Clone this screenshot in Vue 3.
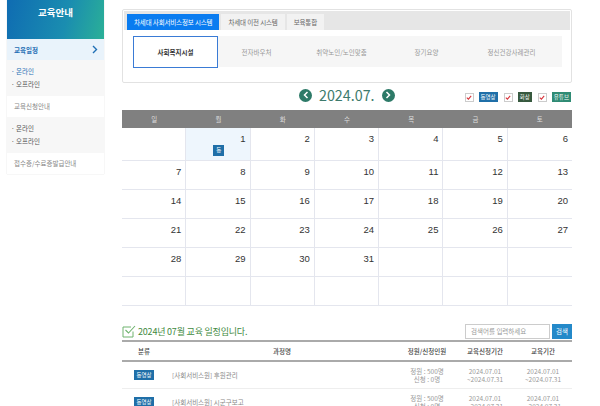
<template>
  <div class="page">
    <aside class="side">
      <div class="side-title">교육안내</div>
      <div class="menu-on">
        <span>교육일정</span>
        <svg width="6" height="9" viewBox="0 0 6 9"><path d="M1 1l3.5 3.5L1 8" fill="none" stroke="#1f6fb5" stroke-width="1.4" /></svg>
      </div>
      <ul class="sub">
        <li class="on">온라인</li>
        <li>오프라인</li>
      </ul>
      <div class="menu">교육신청안내</div>
      <ul class="sub">
        <li>온라인</li>
        <li>오프라인</li>
      </ul>
      <div class="menu">접수증/수료증발급안내</div>
    </aside>

    <main class="main">
      <section class="tab-box">
        <div class="tabs">
          <div class="tab active">차세대 사회서비스정보 시스템</div>
          <div class="tab">차세대 이전 시스템</div>
          <div class="tab">보육통합</div>
        </div>
        <div class="cats">
          <div v-for="(c, i) in cats" :key="c" class="cat" :class="{ sel: i === 0 }">{{ c }}</div>
        </div>
      </section>

      <div class="month-row">
        <div class="month">
          <span class="round"><svg width="6" height="8" viewBox="0 0 6 8"><path d="M4.5 1L1.5 4l3 3" fill="none" stroke="#fff" stroke-width="1.5" /></svg></span>
          <strong>2024.07.</strong>
          <span class="round"><svg width="6" height="8" viewBox="0 0 6 8"><path d="M1.5 1l3 3-3 3" fill="none" stroke="#fff" stroke-width="1.5" /></svg></span>
        </div>
        <div class="legend">
          <template v-for="l in legend" :key="l.name">
            <span class="check"><svg width="6" height="5" viewBox="0 0 6 5"><path d="M.8 2.6l1.6 1.5L5.2.8" fill="none" stroke="#d8333a" stroke-width="1.1" /></svg></span>
            <span class="tag" :class="l.cls">{{ l.name }}</span>
          </template>
        </div>
      </div>

      <div class="cal">
        <div v-for="d in days" :key="d" class="dow">{{ d }}</div>
        <div v-for="(c, i) in cells" :key="i" class="cell" :class="{ today: c === 1 }">
          <span v-if="c">{{ c }}</span>
          <em v-if="c === 1" class="mini">동</em>
        </div>
      </div>

      <div class="list-head">
        <h2>
          <svg width="14" height="13" viewBox="0 0 14 13"><path d="M11 6.5V12H1V2h8" fill="none" stroke="#6fb36f" stroke-width="1" /><path d="M3.5 5l3 3L13 1" fill="none" stroke="#6fb36f" stroke-width="1.1" /></svg>
          2024년 07월 교육 일정입니다.
        </h2>
        <div class="search">
          <input placeholder="검색어를 입력하세요" />
          <button>검색</button>
        </div>
      </div>

      <table>
        <thead>
          <tr>
            <th class="c1">분류</th>
            <th>과정명</th>
            <th class="c3">정원/신청인원</th>
            <th class="c3">교육신청기간</th>
            <th class="c3">교육기간</th>
          </tr>
        </thead>
        <tbody>
          <tr v-for="r in rows" :key="r">
            <td><span class="tag blue">동영상</span></td>
            <td class="name">{{ r }}</td>
            <td>정원 : 500명<br />신청 : 0명</td>
            <td>2024.07.01<br />~2024.07.31</td>
            <td>2024.07.01<br />~2024.07.31</td>
          </tr>
        </tbody>
      </table>
    </main>
  </div>
</template>

<script setup>
const cats = ['사회복지시설', '전자바우처', '취약노인/노인맞춤', '장기요양', '정신건강사례관리']
const legend = [
  { name: '동영상', cls: 'blue' },
  { name: '화상', cls: 'dark' },
  { name: '유튜브', cls: 'teal' }
]
const days = ['일', '월', '화', '수', '목', '금', '토']
// 7월 1일이 월요일, 마지막 줄은 빈 칸
const cells = [null]
for (let i = 1; i <= 31; i++) cells.push(i)
for (let i = 0; i < 10; i++) cells.push(null)
const rows = ['[사회서비스원] 후원관리', '[사회서비스원] 시군구보고']
</script>

<style>
html, body {
  margin: 0;
  height: 406px;
  overflow: hidden;
  background: #fff;
}
</style>

<style scoped>
.page {
  display: flex;
  align-items: flex-start;
  width: 600px;
  height: 406px;
  overflow: hidden;
  font-family: "Noto Sans CJK KR", "Noto Sans", sans-serif;
  color: #333;
}

.side {
  width: 97px;
  margin-left: 7px;
  flex: none;
  background: #f7f7f7;
  box-shadow: 0 0 1px #ccc;
}

.side-title {
  height: 39px;
  box-sizing: border-box;
  padding-bottom: 15px;
  display: flex;
  align-items: center;
  justify-content: center;
  color: #fff;
  font-size: 9.5px;
  font-weight: 700;
  background: linear-gradient(105deg, #0f6cb2 0%, #1a8db0 60%, #2bb097 100%);
}

.menu-on {
  height: 21px;
  display: flex;
  align-items: center;
  justify-content: space-between;
  padding: 0 6px 0 7px;
  background: #e9f3fb;
  color: #1f6fb5;
  font-size: 6.5px;
  font-weight: 700;
}

.menu {
  height: 21px;
  line-height: 21px;
  padding-left: 7px;
  background: #fff;
  color: #888;
  font-size: 6.5px;
}

.sub {
  list-style: none;
  margin: 0;
  padding: 5px 0 5px 7px;
  font-size: 6.5px;
  color: #555;
}

.sub li {
  height: 13px;
  line-height: 13px;
}

.sub li::before {
  content: "· ";
  margin-left: -3px;
}

.sub li.on {
  color: #1f6fb5;
}

.main {
  width: 450px;
  margin-left: 18px;
  flex: none;
}

.tab-box {
  height: 74px;
  margin-top: 9px;
  border: 1px solid #e2e2e2;
  border-radius: 2px;
  box-sizing: border-box;
  padding: 1px 0 0 1px;
}

.tabs {
  display: flex;
  gap: 2px;
  height: 19px;
  box-sizing: border-box;
  padding: 3px 0 0 3px;
  margin-right: 1px;
  background: #e6e6e6;
}

.tab {
  padding: 0 7px;
  height: 16px;
  line-height: 16px;
  background: #f2f2f2;
  color: #666;
  font-size: 6.5px;
  letter-spacing: -0.15px;
}

.tab.active {
  background: #0a7cf0;
  color: #fff;
}

.cats {
  display: flex;
  margin: 6px 9px 0;
  padding-right: 8px;
  height: 31px;
  background: #f6f6f6;
}

.cat {
  flex: 1;
  display: flex;
  align-items: center;
  justify-content: center;
  color: #999;
  font-size: 6.5px;
}

.cat.sel {
  flex: none;
  width: 85px;
  height: 32px;
  margin-right: -4px;
  box-sizing: border-box;
  border: 1px solid #3a7bd5;
  background: #fff;
  color: #333;
  font-weight: 700;
}

.month-row {
  position: relative;
  height: 27px;
  display: flex;
  align-items: center;
  justify-content: flex-end;
}

.month {
  position: absolute;
  left: 177px;
  top: 5px;
  display: flex;
  align-items: center;
  gap: 7px;
}

.month strong {
  font-size: 14.3px;
  font-weight: 400;
  line-height: 14px;
  color: #3d7a6c;
}

.round {
  width: 13px;
  height: 13px;
  border-radius: 50%;
  background: #2d7a68;
  display: flex;
  align-items: center;
  justify-content: center;
}

.legend {
  display: flex;
  align-items: center;
  margin-top: 1px;
  padding-right: 1px;
}

.check {
  width: 9px;
  height: 9px;
  box-sizing: border-box;
  border: 1px solid #ccc;
  background: #fff;
  display: flex;
  align-items: center;
  justify-content: center;
  margin: 0 5px 0 6px;
}

.tag {
  display: inline-block;
  padding: 0 2px;
  height: 10px;
  line-height: 10px;
  color: #fff;
  font-size: 5.5px;
}

.blue { background: #1f6fa8; }
.dark { background: #37593f; }
.teal { background: #2f8b74; }

.cal {
  display: grid;
  grid-template-columns: repeat(7, 1fr);
  grid-template-rows: 18px 33px repeat(5, 29px);
}

.dow {
  background: #808080;
  color: #ddd;
  font-size: 6.5px;
  display: flex;
  align-items: center;
  justify-content: center;
}

.cell {
  position: relative;
  border-bottom: 1px solid #e4e6ee;
  border-right: 1px solid #e4e6ee;
  padding: 4.5px 4px;
  text-align: right;
  font-family: "Liberation Sans", sans-serif;
  font-size: 9.5px;
  box-sizing: border-box;
}

.cell:nth-child(7n + 7) {
  border-right: 0;
}

.cell.today {
  background: #eef6fd;
}

.mini {
  position: absolute;
  left: 27px;
  top: 17px;
  width: 11px;
  height: 11px;
  line-height: 11px;
  background: #1f6fa8;
  color: #fff;
  font-size: 5.5px;
  font-style: normal;
  text-align: center;
  font-family: "Noto Sans CJK KR", sans-serif;
}

.list-head {
  display: flex;
  justify-content: space-between;
  align-items: center;
  margin-top: 17px;
  height: 16px;
}

h2 {
  margin: 0;
  display: flex;
  align-items: center;
  gap: 2px;
  font-size: 9px;
  font-weight: 400;
  letter-spacing: -0.2px;
  color: #3f8a3f;
}

.search {
  display: flex;
  gap: 2px;
}

.search input {
  width: 85px;
  height: 15px;
  padding: 0 5px;
  box-sizing: border-box;
  border: 1px solid #ccc;
  font-size: 6.5px;
  font-family: inherit;
  color: #888;
}

.search input::placeholder {
  color: #999;
}

.search button {
  width: 20px;
  height: 15px;
  padding: 0;
  border: 0;
  background: #2489c9;
  color: #fff;
  font-size: 6.5px;
  font-family: inherit;
}

table {
  width: 100%;
  margin-top: 1px;
  border-collapse: collapse;
  table-layout: fixed;
  font-size: 6.5px;
}

th {
  height: 18px;
  padding: 0;
  font-weight: 500;
  color: #444;
  border-top: 2px solid #aaa;
  border-bottom: 2px solid #aaa;
}

.c1 { width: 44px; }
.c3 { width: 58px; }

td {
  height: 26px;
  padding: 0;
  text-align: center;
  line-height: 8.5px;
  color: #999;
  border-bottom: 1px solid #eee;
}

td.name {
  text-align: left;
  padding-left: 6px;
  color: #888;
}
</style>
